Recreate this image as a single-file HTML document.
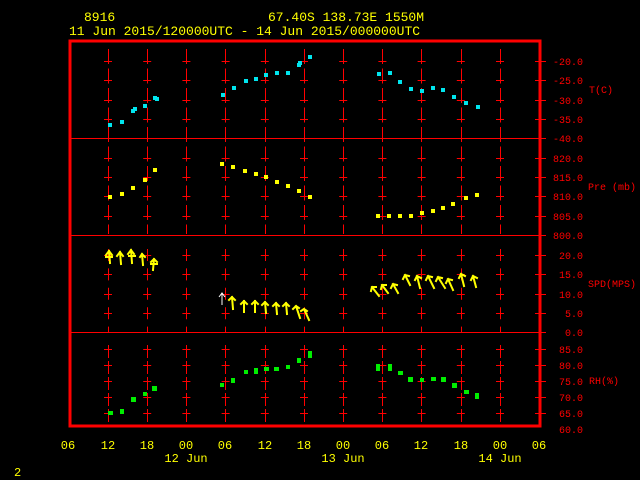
<!DOCTYPE html>
<html><head><meta charset="utf-8"><style>
html,body{margin:0;padding:0;background:#000;width:640px;height:480px;overflow:hidden}
svg{display:block}
text{font-family:"Liberation Mono",monospace}
</style></head><body>
<svg width="640" height="480" viewBox="0 0 640 480" xmlns="http://www.w3.org/2000/svg">
<g fill="#ffff00" font-size="13">
<text x="84" y="21">8916</text>
<text x="268" y="21">67.40S  138.73E  1550M</text>
<text x="69" y="35">11 Jun 2015/120000UTC - 14 Jun 2015/000000UTC</text>
</g>
<g stroke="#ff0000" stroke-width="1">
<!-- panel dividers -->
<line x1="70" y1="138.5" x2="541" y2="138.5"/>
<line x1="70" y1="235.5" x2="541" y2="235.5"/>
<line x1="70" y1="332.5" x2="541" y2="332.5"/>
</g>
<g stroke="#ff0000" stroke-width="1" id="verts">
<!-- panel 1 & 2 dashed verticals -->
<g stroke-dasharray="15 4.5">
<path d="M108.5 49V234M147.5 49V234M186.5 49V234M225.5 49V234M265.5 49V234M304.5 49V234M343.5 49V234M382.5 49V234M421.5 49V234M461.5 49V234M500.5 49V234"/>
</g>
<!-- panel 3 crosses -->
<g stroke-dasharray="12 7.4">
<path d="M108.5 249V332M147.5 249V332M186.5 249V332M225.5 249V332M265.5 249V332M304.5 249V332M343.5 249V332M382.5 249V332M421.5 249V332M461.5 249V332M500.5 249V332"/>
</g>
<!-- panel 4 -->
<g stroke-dasharray="13 3">
<path d="M108.5 345V427M147.5 345V427M186.5 345V427M225.5 345V427M265.5 345V427M304.5 345V427M343.5 345V427M382.5 345V427M421.5 345V427M461.5 345V427M500.5 345V427"/>
</g>
<!-- horizontal arms -->
<g stroke-dasharray="8 31.2">
<path d="M104 61.5H508M104 80.5H508M104 100.5H508M104 119.5H508M104 158.5H508M104 177.5H508M104 196.5H508M104 216.5H508M104 255.5H508M104 274.5H508M104 294.5H508M104 313.5H508M104 349.5H508M104 365.5H508M104 381.5H508M104 397.5H508M104 413.5H508"/>
</g>
<!-- right ticks -->
<path d="M535 61.5H546M535 80.5H546M535 100.5H546M535 119.5H546M535 138.5H546M535 158.5H546M535 177.5H546M535 196.5H546M535 216.5H546M535 235.5H546M535 255.5H546M535 274.5H546M535 294.5H546M535 313.5H546M535 332.5H546M535 349.5H546M535 365.5H546M535 381.5H546M535 397.5H546M535 413.5H546"/>
</g>
<rect x="70" y="41" width="470" height="385" fill="none" stroke="#ff0000" stroke-width="3"/>
<g fill="#ff0000" font-size="10" text-anchor="end">
<text x="583" y="65">-20.0</text><text x="583" y="84">-25.0</text><text x="583" y="104">-30.0</text><text x="583" y="123">-35.0</text><text x="583" y="142">-40.0</text>
<text x="583" y="162">820.0</text><text x="583" y="181">815.0</text><text x="583" y="200">810.0</text><text x="583" y="220">805.0</text><text x="583" y="239">800.0</text>
<text x="583" y="259">20.0</text><text x="583" y="278">15.0</text><text x="583" y="298">10.0</text><text x="583" y="317">5.0</text><text x="583" y="336">0.0</text>
<text x="583" y="353">85.0</text><text x="583" y="369">80.0</text><text x="583" y="385">75.0</text><text x="583" y="401">70.0</text><text x="583" y="417">65.0</text><text x="583" y="433">60.0</text>
</g>
<g fill="#ff0000" font-size="10">
<text x="589" y="93">T(C)</text>
<text x="588" y="190">Pre (mb)</text>
<text x="588" y="287">SPD(MPS)</text>
<text x="589" y="384">RH(%)</text>
</g>
<!-- cyan temperature -->
<g fill="#00e5ee">
<rect x="108" y="123" width="4" height="4"/><rect x="120" y="120" width="4" height="4"/><rect x="131" y="109" width="4" height="4"/><rect x="133" y="107" width="4" height="4"/><rect x="143" y="104" width="4" height="4"/><rect x="153" y="96" width="4" height="4"/><rect x="155" y="97" width="4" height="4"/>
<rect x="221" y="93" width="4" height="4"/><rect x="232" y="86" width="4" height="4"/><rect x="244" y="79" width="4" height="4"/><rect x="254" y="77" width="4" height="4"/><rect x="264" y="73" width="4" height="4"/><rect x="275" y="71" width="4" height="4"/><rect x="286" y="71" width="4" height="4"/><rect x="297" y="63" width="4" height="4"/><rect x="298" y="61" width="4" height="4"/><rect x="308" y="55" width="4" height="4"/>
<rect x="377" y="72" width="4" height="4"/><rect x="388" y="71" width="4" height="4"/><rect x="398" y="80" width="4" height="4"/><rect x="409" y="87" width="4" height="4"/><rect x="420" y="89" width="4" height="4"/><rect x="431" y="86" width="4" height="4"/><rect x="441" y="88" width="4" height="4"/><rect x="452" y="95" width="4" height="4"/><rect x="464" y="101" width="4" height="4"/><rect x="476" y="105" width="4" height="4"/>
</g>
<!-- yellow pressure -->
<g fill="#ffff00">
<rect x="108" y="195" width="4" height="4"/><rect x="120" y="192" width="4" height="4"/><rect x="131" y="186" width="4" height="4"/><rect x="143" y="178" width="4" height="4"/><rect x="153" y="168" width="4" height="4"/>
<rect x="220" y="162" width="4" height="4"/><rect x="231" y="165" width="4" height="4"/><rect x="243" y="169" width="4" height="4"/><rect x="254" y="172" width="4" height="4"/><rect x="264" y="175" width="4" height="4"/><rect x="275" y="180" width="4" height="4"/><rect x="286" y="184" width="4" height="4"/><rect x="297" y="189" width="4" height="4"/><rect x="308" y="195" width="4" height="4"/>
<rect x="376" y="214" width="4" height="4"/><rect x="387" y="214" width="4" height="4"/><rect x="398" y="214" width="4" height="4"/><rect x="409" y="214" width="4" height="4"/><rect x="420" y="211" width="4" height="4"/><rect x="431" y="209" width="4" height="4"/><rect x="441" y="206" width="4" height="4"/><rect x="451" y="202" width="4" height="4"/><rect x="464" y="196" width="4" height="4"/><rect x="475" y="193" width="4" height="4"/>
</g>
<!-- green RH -->
<g fill="#00ee00">
<rect x="108" y="411" width="5" height="4"/><rect x="120" y="409" width="4" height="5"/><rect x="131" y="397" width="5" height="5"/><rect x="143" y="392" width="4" height="4"/><rect x="152" y="386" width="5" height="5"/>
<rect x="220" y="383" width="4" height="4"/><rect x="231" y="378" width="4" height="5"/><rect x="244" y="370" width="4" height="4"/><rect x="254" y="368" width="4" height="6"/><rect x="264" y="367" width="5" height="4"/><rect x="274" y="367" width="5" height="4"/><rect x="286" y="365" width="4" height="4"/><rect x="297" y="358" width="4" height="5"/><rect x="308" y="351" width="4" height="7"/>
<rect x="376" y="364" width="4" height="7"/><rect x="388" y="364" width="4" height="7"/><rect x="398" y="371" width="5" height="4"/><rect x="408" y="377" width="5" height="5"/><rect x="420" y="378" width="4" height="4"/><rect x="431" y="377" width="5" height="4"/><rect x="441" y="377" width="5" height="5"/><rect x="452" y="383" width="5" height="5"/><rect x="464" y="390" width="5" height="4"/><rect x="475" y="393" width="4" height="6"/>
</g>
<!-- wind arrows -->
<g stroke="#ffff00" stroke-width="2" fill="none" stroke-linecap="square">
<path d="M109 251L110 263M106 255L109 251L112 255M106 257H112"/>
<path d="M120 252L121 264M117 256L120 252L123 256"/>
<path d="M131 250L132 263M128 254L131 250L134 254M129 256H135"/>
<path d="M142 254L143 265M140 257L142 254L145 257"/>
<path d="M154 259L153 270M151 262L154 259L157 262M151 264H157"/>
<path d="M232 297L233 309M229 300L232 297L235 300"/>
<path d="M244 301L244 312M241 304L244 301L247 304"/>
<path d="M255 301L255 312M252 304L255 301L258 304"/>
<path d="M265 302L266 313M262 305L265 302L268 305"/>
<path d="M276 303L277 314M273 306L276 303L279 306"/>
<path d="M286 303L287 314M283 306L286 303L289 306"/>
<path d="M296 306L300 318M293 309L296 306L299 308"/>
<path d="M304 309L309 320M301 311L304 309L307 311"/>
<path d="M372 287L379 296M371 291L372 287L376 287"/>
<path d="M382 285L388 293M381 289L382 285L386 285"/>
<path d="M393 284L398 293M391 288L393 284L397 285"/>
<path d="M405 275L410 285M403 279L405 275L409 276"/>
<path d="M417 276L420 288M415 280L417 276L421 278"/>
<path d="M428 276L434 288M426 280L428 276L432 277"/>
<path d="M438 277L445 288M436 281L438 277L442 278"/>
<path d="M448 279L453 290M446 283L448 279L452 280"/>
<path d="M461 274L464 286M459 278L461 274L465 276"/>
<path d="M473 276L476 287M471 280L473 276L477 278"/>
</g>
<path d="M222 293V305M219 297L222 293L225 297" stroke="#ffffff" stroke-width="1" fill="none"/>
<g fill="#ffff00" font-size="12" text-anchor="middle">
<text x="68" y="449">06</text><text x="108" y="449">12</text><text x="147" y="449">18</text><text x="186" y="449">00</text><text x="225" y="449">06</text><text x="265" y="449">12</text><text x="304" y="449">18</text><text x="343" y="449">00</text><text x="382" y="449">06</text><text x="421" y="449">12</text><text x="461" y="449">18</text><text x="500" y="449">00</text><text x="539" y="449">06</text>
<text x="186" y="462">12 Jun</text><text x="343" y="462">13 Jun</text><text x="500" y="462">14 Jun</text>
</g>
<text x="14" y="476" fill="#ffff00" font-size="12">2</text>
</svg>
</body></html>
